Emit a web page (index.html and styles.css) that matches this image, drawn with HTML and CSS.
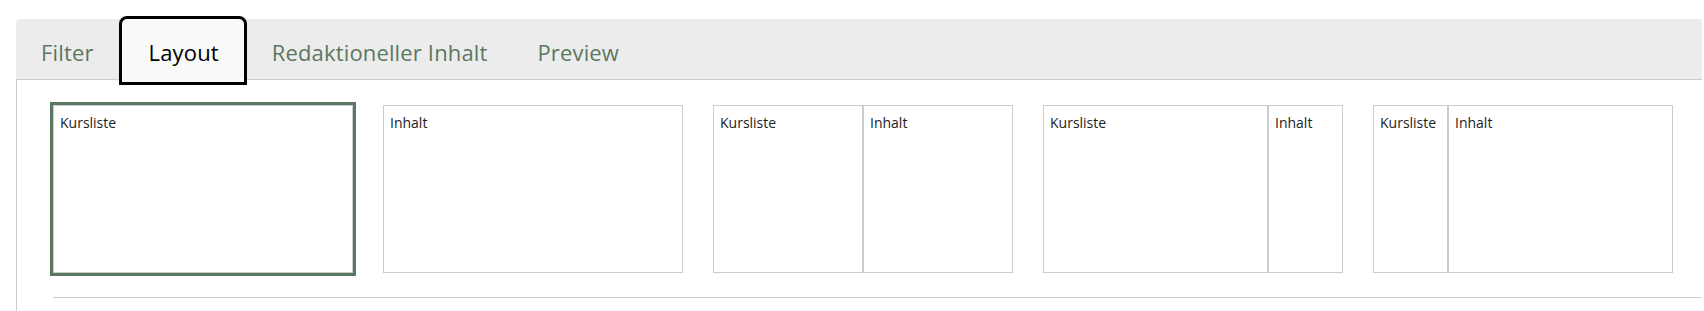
FILE: index.html
```html
<!DOCTYPE html>
<html lang="de">
<head>
    <meta charset="UTF-8">
    <meta name="viewport" content="width=device-width, initial-scale=1.0">
    <title>Layout</title>
    <link rel="stylesheet" href="styles.css">
</head>
<body>
    <div class="editor">
        <div class="tabs">
            <div class="tab">Filter</div>
            <div class="tab active">Layout</div>
            <div class="tab">Redaktioneller Inhalt</div>
            <div class="tab">Preview</div>
        </div>

        <div class="panel">
            <div class="layouts">
                <div class="layout selected">
                    <div class="cell full">Kursliste</div>
                </div>
                <div class="layout">
                    <div class="cell full">Inhalt</div>
                </div>
                <div class="layout">
                    <div class="cell half">Kursliste</div>
                    <div class="cell half">Inhalt</div>
                </div>
                <div class="layout">
                    <div class="cell wide">Kursliste</div>
                    <div class="cell narrow">Inhalt</div>
                </div>
                <div class="layout">
                    <div class="cell narrow">Kursliste</div>
                    <div class="cell wide">Inhalt</div>
                </div>
            </div>
            <div class="divider"></div>
        </div>
    </div>
</body>
</html>
```

FILE: styles.css
```css
body {
    margin: 0;
    font-family: "Open Sans", Arial, sans-serif;
    background-color: white;
    color: #222;
}

.editor {
    padding: 19px 2px 0 16px;
}

/* Tab bar */
.tabs {
    display: flex;
    height: 60px;
    background-color: #ececec;
    border-bottom: 1px solid #cccccc;
    border-top-left-radius: 4px;
}

.tab {
    display: flex;
    align-items: center;
    padding: 5px 25px 0 25px;
    font-size: 22px;
    letter-spacing: 0.15px;
    color: #5b7862;
    cursor: pointer;
}

.tab.active {
    margin: -3px 0 -6px 0;
    padding: 2px 25px 0 27px;
    background-color: #f9f9f9;
    color: black;
    border: 3px solid black;
    border-radius: 8px 8px 0 0;
}

/* Layout choices */
.panel {
    border-left: 1px solid #cccccc;
    padding: 25px 0 14px 36px;
}

.layouts {
    display: flex;
    gap: 30px;
}

.layout {
    display: flex;
    width: 300px;
    height: 168px;
    cursor: pointer;
}

.layout.selected {
    outline: 3px solid #5b7862;
}

.cell {
    box-sizing: border-box;
    border: 1px solid #cccccc;
    padding: 7px 6px;
    font-size: 14px;
    line-height: 20px;
}

.cell.full {
    width: 300px;
}

.cell.half {
    width: 150px;
}

.cell.wide {
    width: 225px;
}

.cell.narrow {
    width: 75px;
}

.divider {
    margin-top: 24px;
    border-top: 1px solid #cccccc;
}
```
